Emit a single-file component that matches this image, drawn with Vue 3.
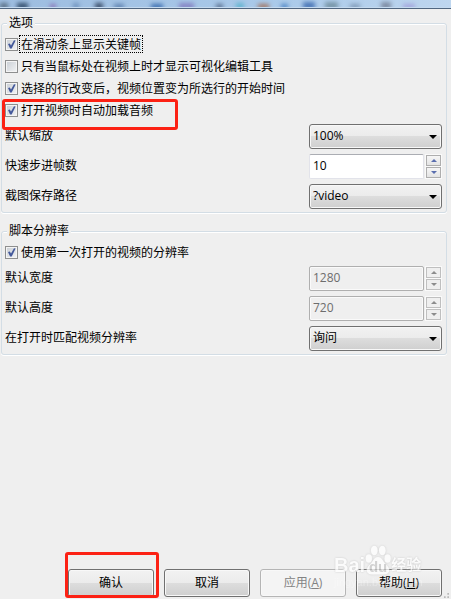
<script setup>
import { reactive } from 'vue'

const checks = reactive([
  { id: 'keyframes', label: '在滑动条上显示关键帧', on: true, focused: true },
  { id: 'mouse-tools', label: '只有当鼠标处在视频上时才显示可视化编辑工具', on: false },
  { id: 'seek-line', label: '选择的行改变后，视频位置变为所选行的开始时间', on: true },
  { id: 'auto-audio', label: '打开视频时自动加载音频', on: true, marked: true }
])
const optionRows = reactive([
  { id: 'zoom', label: '默认缩放', kind: 'select', value: '100%' },
  { id: 'steps', label: '快速步进帧数', kind: 'spin', value: '10' },
  { id: 'path', label: '截图保存路径', kind: 'select', value: '?video' }
])
const resolutionChecks = reactive([
  { id: 'first-res', label: '使用第一次打开的视频的分辨率', on: true }
])
const resolutionRows = reactive([
  { id: 'width', label: '默认宽度', kind: 'spin', value: '1280', disabled: true },
  { id: 'height', label: '默认高度', kind: 'spin', value: '720', disabled: true },
  { id: 'match', label: '在打开时匹配视频分辨率', kind: 'select', value: '询问' }
])
const groups = [
  { title: '选项', checks, rows: optionRows },
  { title: '脚本分辨率', checks: resolutionChecks, rows: resolutionRows }
]
function step(row, amount) {
  row.value = String(Math.max(0, Number(row.value) + amount))
}
</script>

<template>
  <div class="dialog">
    <div class="strip" aria-hidden="true">
      <svg viewBox="0 0 451 7" preserveAspectRatio="none">
        <g class="blobs">
          <rect x="0" y="3" width="8" height="6" fill="#5b7187" />
          <rect x="17" y="3" width="11" height="6" fill="#37516f" />
          <rect x="50" y="4" width="6" height="5" fill="#8a78b8" />
          <rect x="73" y="3" width="6" height="6" fill="#6f93bd" />
          <rect x="95" y="3" width="8" height="6" fill="#3c4f6c" />
          <rect x="114" y="4" width="10" height="5" fill="#5f83b0" />
          <rect x="151" y="4" width="12" height="5" fill="#3b6eb0" />
          <rect x="179" y="3" width="15" height="6" fill="#8585c4" />
          <rect x="216" y="4" width="7" height="5" fill="#5a7090" />
          <rect x="236" y="3" width="8" height="6" fill="#63b4d0" />
          <rect x="258" y="4" width="11" height="5" fill="#a27866" />
          <rect x="281" y="4" width="7" height="5" fill="#4f86c6" />
          <rect x="303" y="2" width="12" height="7" fill="#4d79b8" />
          <rect x="325" y="2" width="13" height="7" fill="#7896a8" />
          <rect x="350" y="4" width="10" height="5" fill="#819bb8" />
          <rect x="381" y="2" width="10" height="7" fill="#7f8da4" />
          <rect x="403" y="4" width="12" height="5" fill="#a3a5dc" />
        </g>
      </svg>
    </div>

    <main class="content">
      <fieldset v-for="group in groups" :key="group.title" class="group">
        <legend>{{ group.title }}</legend>
        <div v-for="c in group.checks" :key="c.id" class="check-row">
          <label class="check">
            <span class="box">
              <input v-model="c.on" type="checkbox" :name="c.id" />
              <svg v-if="c.on" viewBox="0 0 13 13" aria-hidden="true">
                <path d="M3 6 L4.8 5.4 L6 7.6 L9 2.2 L10.6 2.6 L6.7 10.6 L5.1 10.6 Z" fill="#44599b" />
              </svg>
            </span>
            <span class="check-text" :class="{ focused: c.focused }">{{ c.label }}</span>
            <span v-if="c.marked" class="mark mark-check"></span>
          </label>
        </div>
        <div v-for="row in group.rows" :key="row.id" class="row">
          <label :for="row.id">{{ row.label }}</label>
          <div v-if="row.kind === 'select'" class="field">
            <select :id="row.id" v-model="row.value">
              <option>{{ row.value }}</option>
            </select>
            <svg class="arrow" viewBox="0 0 8 4" aria-hidden="true"><path d="M0 0H8L4 4Z" /></svg>
          </div>
          <div v-else class="field">
            <input :id="row.id" v-model="row.value" type="text" :disabled="row.disabled" />
            <div class="spin">
              <button type="button" aria-label="增加" :disabled="row.disabled" @click="step(row, 1)">
                <svg viewBox="0 0 6 3"><path d="M3 0L6 3H0Z" /></svg>
              </button>
              <button type="button" aria-label="减少" :disabled="row.disabled" @click="step(row, -1)">
                <svg viewBox="0 0 6 3"><path d="M0 0H6L3 3Z" /></svg>
              </button>
            </div>
          </div>
        </div>
      </fieldset>
    </main>

    <footer class="actions">
      <div class="action">
        <button type="button" class="btn">确认</button>
        <span class="mark mark-button"></span>
      </div>
      <div class="action"><button type="button" class="btn">取消</button></div>
      <div class="action"><button type="button" class="btn" disabled>应用(<u>A</u>)</button></div>
      <div class="action"><button type="button" class="btn">帮助(<u>H</u>)</button></div>
      <svg class="grip" viewBox="0 0 6 6" aria-hidden="true">
        <path d="M4 0h2v2H4zM0 4h2v2H0zM4 4h2v2H4z" fill="#b9b9b9" />
      </svg>
      <div class="watermark" aria-hidden="true">
        <div class="wm-name">
          <span>Bai</span>
          <span class="paw">
            <svg viewBox="0 0 26 30">
              <ellipse cx="3.8" cy="13.5" rx="3.2" ry="4.2" />
              <ellipse cx="9.3" cy="5.5" rx="3.4" ry="4.8" />
              <ellipse cx="17.3" cy="5.5" rx="3.4" ry="4.8" />
              <ellipse cx="22.6" cy="13.5" rx="3.2" ry="4.2" />
              <path d="M13 12C8.500 12 8 17 4.500 20C0 24 1 29.500 7 29.500H19C25 29.500 26 24 21.500 20C18 17 17.500 12 13 12Z" />
            </svg>
            <span class="du">du</span>
          </span>
          <span class="wm-cn">经验</span>
        </div>
        <div class="wm-url">jingyan.baidu.com</div>
      </div>
    </footer>
  </div>
</template>

<style>
body {
  margin: 0;
  background: #efefef;
}
</style>

<style scoped>
.dialog {
  display: flex;
  flex-direction: column;
  box-sizing: border-box;
  min-height: 100vh;
  overflow: hidden;
  background: #efefef;
  color: #000;
  font-family: "Open Sans", "Noto Sans CJK SC", sans-serif;
  font-size: 12px;
  line-height: 18px;
}
.dialog * {
  box-sizing: border-box;
}
button,
input,
select {
  margin: 0;
  font: inherit;
  color: inherit;
}
.strip {
  flex: none;
  height: 9px;
  overflow: hidden;
  background: linear-gradient(90deg, #9dbde0, #a9c9e9 60%, #bed6ef);
  border-bottom: 1px solid #506680;
  box-shadow: inset 0 -1px #c5daef;
}
.strip svg {
  display: block;
  width: 100%;
  height: 7px;
}
.blobs {
  filter: blur(2px);
}
.content {
  display: flex;
  flex-direction: column;
  gap: 9px;
  padding: 5px 4px 16px 1px;
}
.group {
  min-width: 0;
  margin: 0;
  padding: 1px 4px 1px 3px;
  border: 1px solid #d3dde5;
  border-radius: 3px;
  box-shadow: inset 0 1px #fff, 0 1px #fff;
}
legend {
  height: 18px;
  margin-left: 2px;
  padding: 0 2px;
  background: #efefef;
}
.check-row {
  display: flex;
  align-items: center;
  height: 22px;
}
.check {
  position: relative;
  display: flex;
  align-items: center;
  gap: 2px;
  height: 22px;
}
.box {
  position: relative;
  display: block;
  width: 13px;
  height: 13px;
}
.box input {
  display: block;
  width: 13px;
  height: 13px;
  appearance: none;
  border: 1px solid #8e8f8f;
  background: linear-gradient(135deg, #c9ced4, #f3f4f5);
  box-shadow: inset 0 0 0 1px #f4f4f4;
}
.box svg {
  position: absolute;
  inset: 0;
  width: 13px;
  height: 13px;
  pointer-events: none;
}
.check-text {
  height: 16px;
  padding: 0 1px;
  line-height: 18px;
  white-space: nowrap;
}
.focused {
  outline: 1px dotted #000;
}
.mark {
  position: absolute;
  z-index: 2;
  border: 3px solid #fc2114;
  border-radius: 3px;
  pointer-events: none;
}
.mark-check {
  top: 0;
  left: -3px;
  width: 176px;
  height: 31px;
}
.row {
  display: flex;
  align-items: center;
  justify-content: space-between;
  height: 30px;
}
.field {
  position: relative;
  display: flex;
  align-items: center;
  width: 133px;
  height: 25px;
}
select {
  width: 100%;
  height: 25px;
  padding: 0 20px 0 3px;
  appearance: none;
  border: 1px solid #707070;
  border-radius: 3px;
  background: linear-gradient(#f2f2f2, #ebebeb 50%, #dddddd 50%, #cfcfcf);
  box-shadow: inset 0 0 0 1px #f8f8f8;
}
.arrow {
  position: absolute;
  top: 11px;
  right: 5px;
  width: 8px;
  height: 4px;
  pointer-events: none;
}
.field input {
  flex: 1;
  min-width: 0;
  height: 25px;
  padding: 0 3px 2px;
  border: 1px solid #e2e3ea;
  border-top-color: #abadb3;
  border-radius: 2px;
  background: #fff;
}
.field input:disabled {
  border-color: #afafaf;
  background: #efefef;
  color: #6d6d6d;
  box-shadow: inset 0 0 0 1px #fafafa;
}
.spin {
  display: flex;
  flex-direction: column;
  gap: 1px;
  margin-left: 1px;
  padding: 1px;
  background: #fafafa;
}
.spin button {
  display: flex;
  align-items: center;
  justify-content: center;
  width: 15px;
  height: 11px;
  padding: 0;
  border: 1px solid #aeaeae;
  background: linear-gradient(#f6f6f6, #e4e4e4);
}
.spin svg {
  width: 6px;
  height: 3px;
  fill: #5a6eae;
}
.spin button:disabled {
  border-color: #bfbfbf;
  background: #efefef;
}
.spin button:disabled svg {
  fill: #8c8c8c;
}
.actions {
  position: relative;
  display: flex;
  justify-content: flex-end;
  gap: 10px;
  margin-top: auto;
  padding: 0 9px 2px;
}
.action {
  position: relative;
  width: 86px;
}
.btn {
  display: block;
  width: 100%;
  height: 28px;
  padding: 0 0 1px;
  border: 1px solid #707070;
  border-radius: 3px;
  background: linear-gradient(#f2f2f2, #ebebeb 50%, #dddddd 50%, #cfcfcf);
  box-shadow: inset 0 0 0 1px #f8f8f8;
}
.btn:disabled {
  border-color: #b5b5b5;
  background: #f4f4f4;
  color: #838383;
}
.mark-button {
  top: -17px;
  left: -3px;
  width: 94px;
  height: 46px;
}
.grip {
  position: absolute;
  right: 2px;
  bottom: 1px;
  width: 5px;
  height: 5px;
}
.watermark {
  position: absolute;
  right: 29px;
  bottom: 10px;
  width: 88px;
  color: #fff;
  font-family: "Liberation Sans", "Noto Sans CJK SC", sans-serif;
  pointer-events: none;
}
.wm-name {
  display: flex;
  align-items: flex-end;
  height: 32px;
  opacity: 0.75;
  font-size: 20px;
  font-weight: 700;
  line-height: 20px;
  text-shadow: 0 0 2px #b4b4b4;
}
.paw {
  position: relative;
  width: 26px;
  height: 30px;
}
.paw svg {
  display: block;
  width: 26px;
  height: 30px;
  fill: #fff;
  filter: drop-shadow(0 0 1px #c4c4c4);
}
.du {
  position: absolute;
  right: 0;
  bottom: 1px;
  left: 0;
  color: #c8c8c8;
  font-size: 15px;
  line-height: 15px;
  text-align: center;
  text-shadow: none;
}
.wm-cn {
  font-size: 15px;
}
.wm-url {
  opacity: 0.3;
  font-size: 11px;
  line-height: 14px;
  white-space: nowrap;
}
</style>
